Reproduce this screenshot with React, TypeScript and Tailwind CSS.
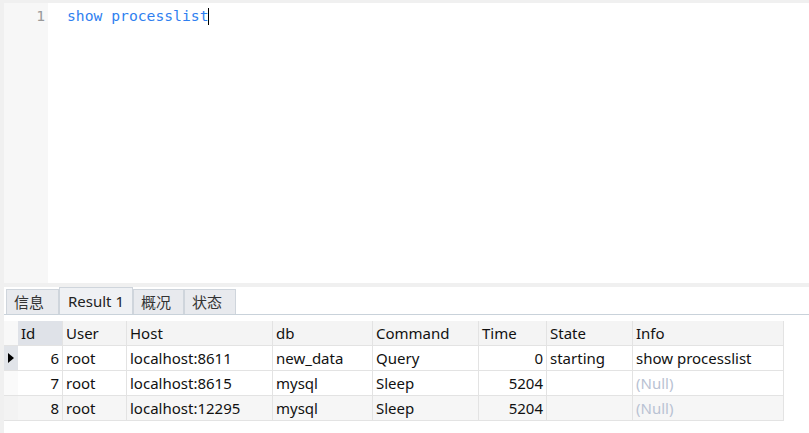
import React from 'react';

const cols = ['14px', '45px', '64px', '146px', '100px', '106px', '68px', '86px', '151px'];

const headers = ['Id', 'User', 'Host', 'db', 'Command', 'Time', 'State', 'Info'];

const rows = [
  { id: '6', user: 'root', host: 'localhost:8611', db: 'new_data', cmd: 'Query', time: '0', state: 'starting', info: 'show processlist' },
  { id: '7', user: 'root', host: 'localhost:8615', db: 'mysql', cmd: 'Sleep', time: '5204', state: '', info: null },
  { id: '8', user: 'root', host: 'localhost:12295', db: 'mysql', cmd: 'Sleep', time: '5204', state: '', info: null },
];

const tabs = [
  { label: '信息', w: 'w-[53px]' },
  { label: 'Result 1', w: 'w-[74px]' },
  { label: '概况', w: 'w-[51px]' },
  { label: '状态', w: 'w-[52px]' },
];

export default function App() {
  const font = { fontFamily: '"Noto Sans", "Noto Sans CJK SC", sans-serif' };
  const cell = 'h-[25px] border-r border-b border-[#e3e3e3] px-[3px] flex items-center whitespace-nowrap overflow-hidden';

  return (
    <div className="w-[809px] h-[433px] bg-[#f0f0f0] pl-[4px] pt-[3px] flex flex-col overflow-hidden" style={font}>
      {/* SQL editor */}
      <div className="h-[280px] flex bg-white">
        <div className="w-[44px] bg-[#f7f7f7] pr-[3px] pt-[4px] text-right text-[#9a9a9a] text-[14.7px] leading-[18px]" style={{ fontFamily: '"DejaVu Sans Mono", monospace' }}>
          1
        </div>
        <div className="flex-1 pl-[19px] pt-[4px] text-[14.7px] leading-[18px] text-[#2f7ff0]" style={{ fontFamily: '"DejaVu Sans Mono", monospace' }}>
          <span>show processlist</span>
          <span className="inline-block w-[1px] h-[17px] bg-black align-[-4px]" />
        </div>
      </div>

      {/* result panel */}
      <div className="mt-[4px] flex-1 bg-white">
        <div className="h-[28px] flex items-end pl-[2px] border-b border-[#c9d2da]">
          {tabs.map((t, i) => (
            <div
              key={t.label}
              className={`${t.w} shrink-0 flex items-center whitespace-nowrap border border-b-0 border-[#cfd5dc] text-[15px] px-[7px] ${
                i === 1 ? 'h-[27px] bg-[#eff1f4] text-[#222] pl-[8px]' : 'h-[25px] bg-[#e8eaee] text-[#333]'
              }`}
            >
              {t.label}
            </div>
          ))}
        </div>

        <div className="mt-[6px] grid text-[15px] text-[#111] w-fit" style={{ gridTemplateColumns: cols.join(' ') }}>
          <div className={`${cell} bg-[#f8f8f8] border-r-0`} />
          {headers.map((h, i) => (
            <div key={h} className={`${cell} ${i === 0 ? 'bg-[#dfe2e8]' : 'bg-[#f4f4f4]'}`}>
              {h}
            </div>
          ))}
          {rows.map((r, ri) => {
            const bg = ri === 2 ? 'bg-[#f6f6f6]' : 'bg-white';
            return (
              <React.Fragment key={r.id}>
                <div className={`${cell} border-r-0 ${ri === 0 ? 'bg-[#e1e4e9]' : ri === 2 ? 'bg-[#f3f3f3]' : 'bg-[#fafafa]'} justify-center px-0`}>
                  {ri === 0 && (
                    <svg width="6" height="10" viewBox="0 0 6 10">
                      <path d="M0 0 L6 5 L0 10 Z" fill="#000" />
                    </svg>
                  )}
                </div>
                <div className={`${cell} ${bg} justify-end`}>{r.id}</div>
                <div className={`${cell} ${bg}`}>{r.user}</div>
                <div className={`${cell} ${bg}`}>{r.host}</div>
                <div className={`${cell} ${bg}`}>{r.db}</div>
                <div className={`${cell} ${bg}`}>{r.cmd}</div>
                <div className={`${cell} ${bg} justify-end`}>{r.time}</div>
                <div className={`${cell} ${bg}`}>{r.state}</div>
                <div className={`${cell} ${bg} ${r.info ? '' : 'text-[#b9c2d3]'}`}>{r.info ?? '(Null)'}</div>
              </React.Fragment>
            );
          })}
        </div>
      </div>
    </div>
  );
}
